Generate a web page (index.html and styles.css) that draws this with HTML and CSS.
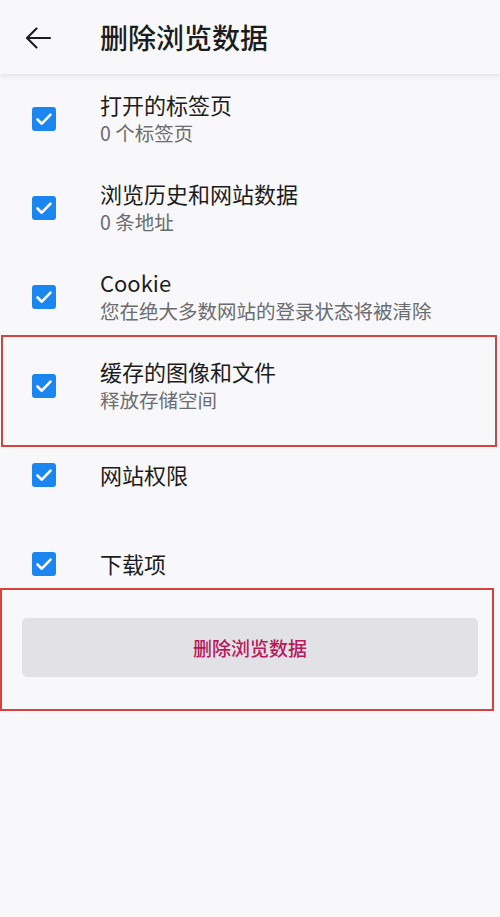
FILE: index.html
```html
<!DOCTYPE html>
<html lang="zh-CN">
<head>
<meta charset="utf-8">
<title>删除浏览数据</title>
<link rel="stylesheet" href="styles.css">
</head>
<body>
<div class="page">
  <header class="topbar">
    <svg class="back" width="26" height="22" viewBox="0 0 26 22" aria-hidden="true">
      <path d="M25 11H2.5M11.5 1.5L2 11l9.5 9.5" fill="none" stroke="#1c1c1e" stroke-width="2.1" stroke-linecap="round" stroke-linejoin="round"/>
    </svg>
    <h1 class="title">删除浏览数据</h1>
  </header>

  <ul class="list">
    <li class="row">
      <span class="check"><svg viewBox="0 0 24 24"><path d="M5.5 12.5l4.3 4.2 8.7-9" fill="none" stroke="#fff" stroke-width="2.6" stroke-linecap="round" stroke-linejoin="round"/></svg></span>
      <div class="text"><div class="label">打开的标签页</div><div class="sub">0 个标签页</div></div>
    </li>
    <li class="row">
      <span class="check"><svg viewBox="0 0 24 24"><path d="M5.5 12.5l4.3 4.2 8.7-9" fill="none" stroke="#fff" stroke-width="2.6" stroke-linecap="round" stroke-linejoin="round"/></svg></span>
      <div class="text"><div class="label">浏览历史和网站数据</div><div class="sub">0 条地址</div></div>
    </li>
    <li class="row">
      <span class="check"><svg viewBox="0 0 24 24"><path d="M5.5 12.5l4.3 4.2 8.7-9" fill="none" stroke="#fff" stroke-width="2.6" stroke-linecap="round" stroke-linejoin="round"/></svg></span>
      <div class="text"><div class="label">Cookie</div><div class="sub">您在绝大多数网站的登录状态将被清除</div></div>
    </li>
    <li class="row">
      <span class="check"><svg viewBox="0 0 24 24"><path d="M5.5 12.5l4.3 4.2 8.7-9" fill="none" stroke="#fff" stroke-width="2.6" stroke-linecap="round" stroke-linejoin="round"/></svg></span>
      <div class="text"><div class="label">缓存的图像和文件</div><div class="sub">释放存储空间</div></div>
    </li>
    <li class="row">
      <span class="check"><svg viewBox="0 0 24 24"><path d="M5.5 12.5l4.3 4.2 8.7-9" fill="none" stroke="#fff" stroke-width="2.6" stroke-linecap="round" stroke-linejoin="round"/></svg></span>
      <div class="text"><div class="label">网站权限</div></div>
    </li>
    <li class="row">
      <span class="check"><svg viewBox="0 0 24 24"><path d="M5.5 12.5l4.3 4.2 8.7-9" fill="none" stroke="#fff" stroke-width="2.6" stroke-linecap="round" stroke-linejoin="round"/></svg></span>
      <div class="text"><div class="label">下载项</div></div>
    </li>
  </ul>

  <div class="actions">
    <button class="clear-btn" type="button">删除浏览数据</button>
  </div>

  <div class="mark mark-cache"></div>
  <div class="mark mark-button"></div>
</div>
</body>
</html>
```

FILE: styles.css
```css
* { box-sizing: border-box; }

html, body {
  margin: 0;
  padding: 0;
  background: #f8f8fa;
}

body {
  font-family: "Noto Sans CJK SC", "Noto Sans", Roboto, sans-serif;
  color: #1c1c1e;
}

.page {
  position: relative;
  width: 500px;
  min-height: 917px;
}

.topbar {
  height: 74px;
  display: flex;
  align-items: center;
  background: #f8f8fa;
  box-shadow: 0 2px 5px rgba(0, 0, 0, 0.09);
  position: relative;
  z-index: 1;
}

.back {
  margin-left: 25px;
  margin-top: 2px;
  flex: none;
}

.title {
  margin: 0 0 0 49px;
  font-size: 28px;
  font-weight: 500;
  line-height: 36px;
  color: #1c1c1e;
}

.list {
  list-style: none;
  margin: 0;
  padding: 0;
}

.row {
  height: 89px;
  display: flex;
  align-items: center;
  padding-left: 32px;
}

.check {
  width: 24px;
  height: 24px;
  border-radius: 3px;
  background: #1b86ef;
  flex: none;
  display: flex;
}

.check svg {
  width: 24px;
  height: 24px;
}

.text {
  margin-left: 44px;
}

.label {
  font-size: 22px;
  line-height: 27px;
  color: #1c1c1e;
}

.sub {
  font-size: 19.5px;
  line-height: 29px;
  color: #6b6b70;
}

.actions {
  padding: 10px 22px 0 22px;
}

.clear-btn {
  display: block;
  width: 456px;
  height: 59px;
  border: none;
  border-radius: 5px;
  background: #e1e1e6;
  color: #b8195a;
  font-family: "Noto Sans CJK SC", "Noto Sans", sans-serif;
  font-size: 19px;
  font-weight: 500;
  padding: 0;
}

.mark {
  position: absolute;
  border: 2px solid #d8413d;
  pointer-events: none;
}

.mark-cache {
  left: 1px;
  top: 335px;
  width: 496px;
  height: 112px;
}

.mark-button {
  left: 0;
  top: 588px;
  width: 494px;
  height: 123px;
}
```
